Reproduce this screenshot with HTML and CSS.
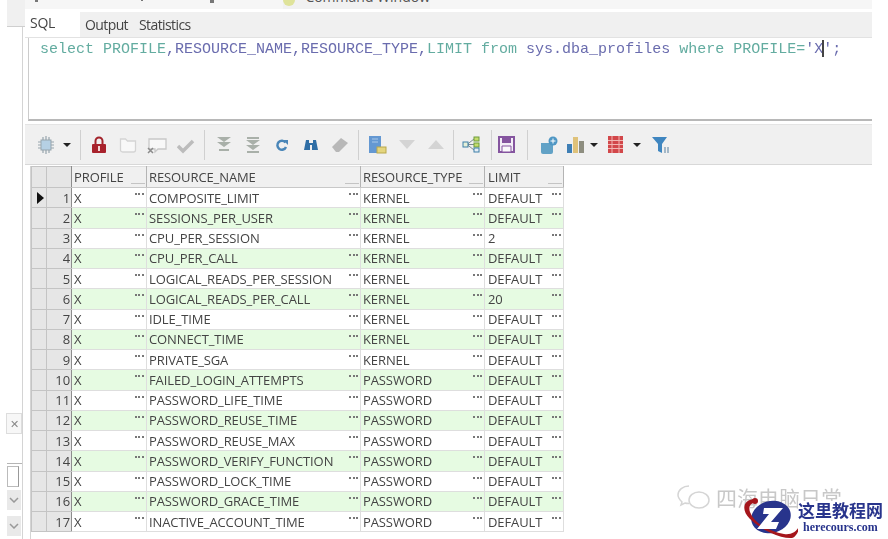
FILE: index.html
```html
<!DOCTYPE html>
<html lang="zh-CN">
<head>
    <meta charset="UTF-8">
    <title>SQL Window</title>
    <link rel="stylesheet" href="styles.css">
</head>
<body>
    <div class="side">
        <div class="side-top"></div>
        <div class="side-body">
            <div class="side-close">✕</div>
            <div class="side-rule"></div>
            <div class="side-field"></div>
            <div class="side-drop"><svg width="10" height="6" viewBox="0 0 10 6"><path d="M1 1l4 4 4-4" fill="none" stroke="#999" stroke-width="1.500"/></svg></div>
            <div class="side-drop"><svg width="10" height="6" viewBox="0 0 10 6"><path d="M1 1l4 4 4-4" fill="none" stroke="#999" stroke-width="1.500"/></svg></div>
        </div>
    </div>

    <div class="main">
        <div class="window-tabs">
            <span class="tab-mark first"></span>
            <span class="tab-mark second"></span>
            <span class="tab-mark third"></span>
            <div class="window-tab"><span class="tab-dot"></span><span class="tab-name">Command Window</span></div>
        </div>
        <div class="sql-tabs">
            <div class="sql-tab active">SQL</div>
            <div class="sql-tab">Output</div>
            <div class="sql-tab">Statistics</div>
        </div>
        <div class="editor">
            <span class="kw">select PROFILE</span><span class="id">,RESOURCE_NAME,RESOURCE_TYPE,</span><span class="kw">LIMIT from</span> <span class="id">sys.dba_profiles</span> <span class="kw">where PROFILE=</span><span class="id">'X<span class="caret"></span>';</span>
        </div>
        <div class="toolbar">
            <span class="tool"><svg width="18" height="20" viewBox="0 0 18 20"><rect x="4" y="5" width="10" height="10" fill="#b5d0e4" stroke="#97a5ad"/><path d="M1 7h3M1 10h3M1 13h3M14 7h3M14 10h3M14 13h3M6 2v3M9 1v4M12 2v3M6 15v3M9 15v4M12 15v3" stroke="#97a5ad" stroke-width="1.200"/></svg></span>
            <span class="drop"></span>
            <span class="sep wide"></span>
            <span class="tool"><svg width="16" height="18" viewBox="0 0 16 18"><path d="M4.500 8V5a3.500 3.500 0 0 1 7 0v3" fill="none" stroke="#a3242c" stroke-width="2"/><rect x="1" y="8" width="14" height="9" rx="1" fill="#a8222c"/><rect x="7" y="10" width="2" height="5" fill="#f3d5d5"/></svg></span>
            <span class="tool"><svg width="18" height="18" viewBox="0 0 18 18"><path d="M1.500 3h5l2 2h8v9a2 2 0 0 1-2 2h-11a2 2 0 0 1-2-2z" fill="#f8f8f8" stroke="#d4d4d4" stroke-width="1.300"/></svg></span>
            <span class="tool"><svg width="20" height="18" viewBox="0 0 20 18"><path d="M2 3h17v10h-8l-3 3v-3H2z" fill="#f8f8f8" stroke="#c8c8c8" stroke-width="1.300"/><path d="M1 12l5 5M6 12l-5 5" stroke="#8c8c8c" stroke-width="1.500"/></svg></span>
            <span class="tool"><svg width="18" height="18" viewBox="0 0 18 18"><path d="M1 10l5 5 10-10" fill="none" stroke="#bcbcbc" stroke-width="3.500"/></svg></span>
            <span class="sep"></span>
            <span class="tool"><svg width="16" height="16" viewBox="0 0 16 16"><path d="M1 0h14L8 5zM1 5h14L8 10z" fill="#a9b0a9"/><path d="M3 12h10v2H3z" fill="#a9b0a9"/></svg></span>
            <span class="tool"><svg width="16" height="16" viewBox="0 0 16 16"><path d="M2 0h12v2H2zM1 3h14L8 8zM1 8h14L8 13zM2 14h12v2H2z" fill="#a9b0a9"/></svg></span>
            <span class="tool"><svg width="14" height="14" viewBox="0 0 14 14"><path d="M10.500 4.500A4.500 4.500 0 1 0 11 9" fill="none" stroke="#4a86b8" stroke-width="2.500"/><path d="M8 2h5v5z" fill="#4a86b8"/></svg></span>
            <span class="tool"><svg width="14" height="12" viewBox="0 0 14 12"><path d="M2 1h3v3h4V1h3l2 10H8V6H6v5H0z" fill="#2f6ea5"/></svg></span>
            <span class="tool"><svg width="18" height="16" viewBox="0 0 18 16"><path d="M1 10l9-9 7 5-9 9H5z" fill="#b8b8b8"/></svg></span>
            <span class="sep"></span>
            <span class="tool"><svg width="18" height="18" viewBox="0 0 18 18"><rect x="0" y="0" width="12" height="17" fill="#6498d2"/><path d="M3 3h6M3 6h6" stroke="#a9c8e8"/><rect x="8" y="11" width="9" height="6" fill="#e4d57e" stroke="#b9a84c"/></svg></span>
            <span class="tool"><svg width="16" height="9" viewBox="0 0 16 9"><path d="M0 0h16L8 9z" fill="#d4d4d4"/></svg></span>
            <span class="tool"><svg width="16" height="9" viewBox="0 0 16 9"><path d="M0 9h16L8 0z" fill="#d4d4d4"/></svg></span>
            <span class="sep tight"></span>
            <span class="tool"><svg width="18" height="17" viewBox="0 0 18 17"><path d="M5 8.500L12 3M5 8.500h7M5 8.500L12 14" stroke="#7b8a90"/><rect x="1" y="6" width="5" height="5" fill="#e5f0d8" stroke="#3c7fa8"/><rect x="12" y="1" width="5" height="4" fill="#c4dc6c" stroke="#6f9c3c"/><rect x="12" y="7" width="5" height="4" fill="#c4dc6c" stroke="#6f9c3c"/><rect x="12" y="12" width="5" height="4" fill="#e5eef5" stroke="#3c7fa8"/></svg></span>
            <span class="sep flush"></span>
            <span class="tool"><svg width="17" height="17" viewBox="0 0 17 17"><path d="M1 1h15v15H1z" fill="#f3eef7" stroke="#85559f" stroke-width="2"/><path d="M4 1h9v6H4z" fill="#85559f"/><path d="M4 10h9v6H4z" fill="#fbfafc" stroke="#85559f"/></svg></span>
            <span class="sep even"></span>
            <span class="tool"><svg width="18" height="18" viewBox="0 0 18 18"><path d="M1 7h12v9a2 2 0 0 1-2 2H3a2 2 0 0 1-2-2z" fill="#62a2c6"/><circle cx="13" cy="5" r="4.500" fill="#4f97c4"/><path d="M10.500 5h5M13 2.500v5" stroke="#fff"/></svg></span>
            <span class="tool small"><svg width="17" height="16" viewBox="0 0 17 16"><rect x="0" y="7" width="5" height="9" fill="#3f7fb5"/><rect x="6" y="0" width="5" height="16" fill="#dfc27a"/><rect x="12" y="4" width="5" height="12" fill="#8e8e80"/></svg></span>
            <span class="drop"></span>
            <span class="tool"><svg width="15" height="17" viewBox="0 0 15 17"><rect x="0" y="0" width="15" height="17" fill="#d2474a"/><path d="M0 4.500h15M0 8.500h15M0 12.500h15M4 0v17M11 0v17" stroke="#f2b6b2"/></svg></span>
            <span class="drop"></span>
            <span class="tool funnel"><svg width="19" height="16" viewBox="0 0 19 16"><path d="M0 0h15L10 7v9l-4-2V7z" fill="#3f86c0"/><path d="M13 10v6M16 10v6" stroke="#7a9ab3" stroke-width="1.300"/></svg></span>
        </div>
        <div class="grid-wrap">
            <table class="grid">
                <thead>
                    <tr><th class="mark"></th><th class="num"></th><th class="c1">PROFILE<span class="resize"></span></th><th class="c2">RESOURCE_NAME<span class="resize"></span></th><th class="c3">RESOURCE_TYPE<span class="resize"></span></th><th class="c4">LIMIT<span class="resize"></span></th></tr>
                </thead>
                <tbody id="rows"></tbody>
            </table>
        </div>
    </div>

    <div class="watermark">
        <svg width="34" height="26" viewBox="0 0 34 26"><path d="M12 1C6 1 1 5 1 10c0 3 2 5 4 7l-1 3 4-2c1 .4 2 .5 4 .5" fill="#fff" stroke="#d5d5d5" stroke-width="1.500"/><ellipse cx="22" cy="15" rx="10" ry="8" fill="#fff" stroke="#d5d5d5" stroke-width="1.500"/></svg>
        <span class="wm-text">四海电脑日常</span>
    </div>
    <div class="logo">
        <svg width="58" height="42" viewBox="0 0 58 42">
            <ellipse cx="29" cy="20" rx="20" ry="16" transform="rotate(-15 29 20)" fill="#28348c"/>
            <path d="M13 2C2 2-2 12 8 22 20 34 40 42 50 41 54 40 57 34 58 28 54 36 48 38 42 37 26 34 12 26 8 15 6 9 9 6 13 6z" fill="#a5161c"/>
            <circle cx="13" cy="4" r="3" fill="#a5161c"/>
            <path d="M22 11H41L29 25h8l-3 7H15L27 17H21z" fill="#fff"/>
        </svg>
        <div class="logo-text">
            <div class="logo-cn">这里教程网</div>
            <div class="logo-en">herecours.com</div>
        </div>
    </div>

    <script>
        var rows = [
            ["COMPOSITE_LIMIT", "KERNEL", "DEFAULT"],
            ["SESSIONS_PER_USER", "KERNEL", "DEFAULT"],
            ["CPU_PER_SESSION", "KERNEL", "2"],
            ["CPU_PER_CALL", "KERNEL", "DEFAULT"],
            ["LOGICAL_READS_PER_SESSION", "KERNEL", "DEFAULT"],
            ["LOGICAL_READS_PER_CALL", "KERNEL", "20"],
            ["IDLE_TIME", "KERNEL", "DEFAULT"],
            ["CONNECT_TIME", "KERNEL", "DEFAULT"],
            ["PRIVATE_SGA", "KERNEL", "DEFAULT"],
            ["FAILED_LOGIN_ATTEMPTS", "PASSWORD", "DEFAULT"],
            ["PASSWORD_LIFE_TIME", "PASSWORD", "DEFAULT"],
            ["PASSWORD_REUSE_TIME", "PASSWORD", "DEFAULT"],
            ["PASSWORD_REUSE_MAX", "PASSWORD", "DEFAULT"],
            ["PASSWORD_VERIFY_FUNCTION", "PASSWORD", "DEFAULT"],
            ["PASSWORD_LOCK_TIME", "PASSWORD", "DEFAULT"],
            ["PASSWORD_GRACE_TIME", "PASSWORD", "DEFAULT"],
            ["INACTIVE_ACCOUNT_TIME", "PASSWORD", "DEFAULT"]
        ];
        var dots = '<span class="dots"></span>';
        var html = "";
        rows.forEach(function (r, i) {
            html += '<tr class="' + (i % 2 ? "even" : "") + '">' +
                '<td class="mark">' + (i === 0 ? '<span class="pointer"></span>' : '') + '</td>' +
                '<td class="num">' + (i + 1) + '</td>' +
                '<td class="c1">X' + dots + '</td>' +
                '<td class="c2">' + r[0] + dots + '</td>' +
                '<td class="c3">' + r[1] + dots + '</td>' +
                '<td class="c4">' + r[2] + dots + '</td></tr>';
        });
        document.getElementById("rows").innerHTML = html;
    </script>
</body>
</html>
```

FILE: styles.css
```css
body {
    margin: 0;
    width: 888px;
    height: 539px;
    overflow: hidden;
    position: relative;
    background: #fff;
    font-family: "Open Sans", "Liberation Sans", "Noto Sans CJK SC", sans-serif;
    color: #444;
    display: flex;
}

.side {
    width: 25px;
    height: 539px;
    flex-shrink: 0;
    display: flex;
    flex-direction: column;
    overflow: hidden;
    filter: blur(0.4px);
}

.side-top {
    height: 26px;
    flex-shrink: 0;
    margin-left: 7px;
    background: #f0f0f0;
    border-bottom: 1px solid #cfcfcf;
}

.side-body {
    flex: 1;
    width: 23px;
    box-sizing: border-box;
    border-right: 1px solid #d4d4d4;
    padding: 386px 0 0 6px;
}

.side-close {
    width: 16px;
    height: 21px;
    line-height: 20px;
    text-align: center;
    font-size: 11px;
    color: #888;
    background: #f7f7f7;
    border: 1px solid #ddd;
    box-sizing: border-box;
}

.side-rule {
    height: 1px;
    margin: 29px 0 2px 1px;
    background: #b5b5b5;
}

.side-field {
    width: 12px;
    height: 21px;
    margin-left: 1px;
    border: 1px solid #bbb;
    border-right-color: #999;
    box-sizing: border-box;
}

.side-drop {
    width: 14px;
    height: 20px;
    margin: 3px 0 6px 1px;
    background: #e9e9e9;
    display: flex;
    align-items: center;
    justify-content: center;
}

.main {
    width: 847px;
    height: 539px;
    flex-shrink: 0;
    overflow: hidden;
    filter: blur(0.4px);
}

.window-tabs {
    height: 9px;
    background: #f6f6f6;
    border-bottom: 3px solid #fff;
    padding-left: 10px;
    overflow: hidden;
    display: flex;
}

.tab-mark {
    height: 2px;
    width: 3px;
    background: #777;
}

.tab-mark.second {
    margin-left: 103px;
    width: 2px;
    height: 1px;
}

.tab-mark.third {
    margin-left: 67px;
    width: 4px;
    height: 3px;
}

.window-tab {
    width: 147px;
    height: 9px;
    margin-left: 69px;
    background: #f1f1f1;
    display: flex;
    gap: 10px;
}

.tab-dot {
    width: 14px;
    height: 14px;
    margin-top: -8px;
    border-radius: 7px;
    background: #dfe39a;
}

.tab-name {
    font-size: 14px;
    line-height: 16px;
    margin-top: -11px;
    white-space: nowrap;
    color: #555;
}

.sql-tabs {
    height: 25px;
    background: #f0f0f0;
    display: flex;
    border-bottom: 1px solid #e2e2e2;
    font-size: 14px;
    letter-spacing: -0.6px;
}

.sql-tab {
    padding: 3px 7px 0 3px;
    margin-right: 1px;
    color: #444;
}

.sql-tab.active {
    width: 55px;
    box-sizing: border-box;
    padding: 1px 0 0 5px;
    margin-right: 2px;
    background: #fff;
    letter-spacing: -0.3px;
}

.editor {
    height: 83px;
    margin-left: 3px;
    box-sizing: border-box;
    padding: 2px 0 0 11px;
    background: #fff;
    border-left: 1px solid #ccc;
    border-bottom: 2px solid #b8b8b8;
    font-family: "Liberation Mono", monospace;
    font-size: 15px;
    line-height: 16px;
    white-space: nowrap;
}

.kw {
    color: #63aca0;
}

.id {
    color: #6a6cae;
}

.caret {
    display: inline-block;
    width: 2px;
    height: 17px;
    margin: 0 -1px;
    vertical-align: -4px;
    background: #444;
}

.toolbar {
    height: 41px;
    margin-top: 3px;
    border-top: 1px solid #e4e4e4;
    border-bottom: 1px solid #d8d8d8;
    box-sizing: border-box;
    background: #f0f0f0;
    display: flex;
    align-items: center;
    padding-left: 6px;
}

.tool {
    width: 29px;
    flex-shrink: 0;
    display: flex;
    justify-content: center;
    align-items: center;
}

.tool.small {
    width: 24px;
}

.tool.funnel {
    margin-left: 3px;
}

.sep {
    width: 1px;
    height: 30px;
    flex-shrink: 0;
    margin: 0 4px;
    background: #d0d0d0;
}

.sep.wide {
    margin: 0 3px 0 6px;
}

.sep.tight {
    margin: 0 2px 0 3px;
}

.sep.flush {
    margin: 0 0 0 6px;
}

.sep.even {
    margin: 0 6px;
}

.drop {
    width: 14px;
    flex-shrink: 0;
    display: flex;
    justify-content: center;
}

.drop::before {
    content: "";
    border-left: 4px solid transparent;
    border-right: 4px solid transparent;
    border-top: 4px solid #222;
}

.grid-wrap {
    margin: 1px 0 0 6px;
    height: 373px;
    box-shadow: -1px 0 0 #d4d4d4;
}

.grid {
    border-collapse: collapse;
    table-layout: fixed;
    width: 532px;
    font-size: 13px;
    letter-spacing: -0.1px;
}

.grid th,
.grid td {
    height: 20.250px;
    padding: 0 0 0 2px;
    box-sizing: border-box;
    border: 1px solid #dedede;
    font-weight: normal;
    text-align: left;
    white-space: nowrap;
    position: relative;
}

.grid th {
    background: #f0f0f0;
    height: 21px;
    border-right-color: #b4b4b4;
    border-bottom-color: #c8c8c8;
}

.grid .mark,
.grid .num {
    background: #e6e6e6;
    border-color: #c4c4c4;
}

.grid .mark {
    width: 15px;
    padding: 0;
}

.grid .num {
    width: 25px;
    text-align: right;
    padding-right: 1px;
    border-right-color: #8d8d8d;
}

.grid .c1 {
    width: 75px;
}

.grid .c2 {
    width: 214px;
}

.grid .c3 {
    width: 124px;
}

.grid .c4 {
    width: 79px;
    padding-left: 3px;
}

.even td:not(.mark):not(.num) {
    background: #e6fbe2;
}

.dots {
    position: absolute;
    top: 5px;
    right: 2px;
    width: 9px;
    height: 2px;
    background: repeating-linear-gradient(to right, #777 0 2px, transparent 2px 3.500px);
}

.resize {
    position: absolute;
    right: 1px;
    bottom: 3px;
    width: 14px;
    height: 1px;
    background: #c4c4c4;
}

.pointer {
    display: block;
    margin-left: 5px;
    width: 0;
    height: 0;
    border-top: 6px solid transparent;
    border-bottom: 6px solid transparent;
    border-left: 7px solid #111;
}

.watermark {
    position: absolute;
    left: 677px;
    top: 485px;
    display: flex;
    align-items: center;
    gap: 5px;
    color: #c8c8c8;
    font-size: 21px;
    line-height: 26px;
}

.logo {
    position: absolute;
    left: 742px;
    top: 497px;
    height: 42px;
    width: 146px;
    display: flex;
}

.logo-text {
    margin: 4px 0 0 -2px;
    height: 38px;
    background: #fff;
    text-align: center;
}

.logo-cn {
    font-size: 17px;
    line-height: 18px;
    font-weight: bold;
    color: #28348c;
    font-family: "Noto Sans CJK SC", sans-serif;
}

.logo-en {
    margin-top: 1px;
    font-size: 12px;
    line-height: 14px;
    font-weight: bold;
    color: #28348c;
    font-family: "Liberation Serif", serif;
}
```
